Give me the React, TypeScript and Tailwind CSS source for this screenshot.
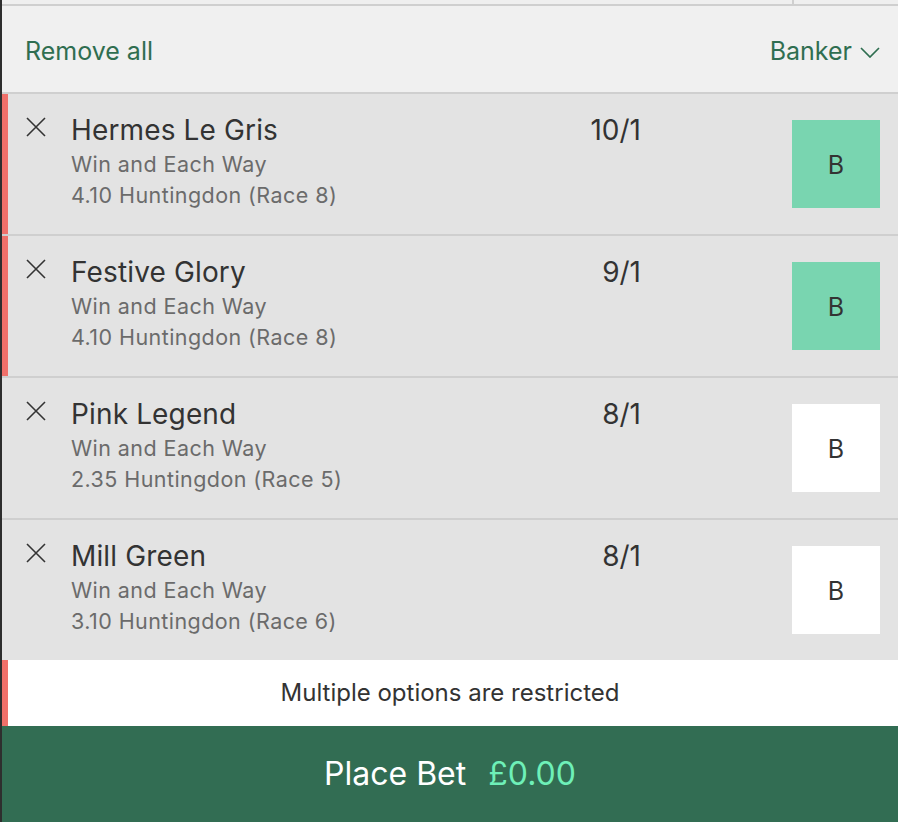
type Selection = {
  name: string;
  market: string;
  race: string;
  odds: string;
  banker: boolean;
  restricted: boolean;
};

const selections: Selection[] = [
  { name: "Hermes Le Gris", market: "Win and Each Way", race: "4.10 Huntingdon (Race 8)", odds: "10/1", banker: true, restricted: true },
  { name: "Festive Glory", market: "Win and Each Way", race: "4.10 Huntingdon (Race 8)", odds: "9/1", banker: true, restricted: true },
  { name: "Pink Legend", market: "Win and Each Way", race: "2.35 Huntingdon (Race 5)", odds: "8/1", banker: false, restricted: false },
  { name: "Mill Green", market: "Win and Each Way", race: "3.10 Huntingdon (Race 6)", odds: "8/1", banker: false, restricted: false },
];

function SelectionRow({ s }: { s: Selection }) {
  return (
    <div className="flex h-[140px] shrink-0 bg-[#e3e3e3]">
      {/* restriction marker */}
      <div className={`w-[6px] shrink-0 ${s.restricted ? "bg-[#f0706a]" : "bg-[#e3e3e3]"}`} />

      <div className="flex flex-1 pt-[18px] pr-[18px]">
        <button className="ml-[18px] mt-[5px] h-[20px] w-[20px] shrink-0 text-[#333]">
          <svg width="20" height="20" viewBox="0 0 20 20" fill="none" stroke="currentColor" strokeWidth="1.6">
            <path d="M1 1L19 19M19 1L1 19" />
          </svg>
        </button>

        <div className="ml-[25px] flex-1">
          <div className="text-[28px] leading-[36px] tracking-[0.005em] text-[#333]">{s.name}</div>
          <div className="text-[21.5px] leading-[32px] tracking-[0.02em] text-[#6b6b6b]">{s.market}</div>
          <div className="text-[21.5px] leading-[31px] tracking-[0.02em] text-[#6b6b6b]">{s.race}</div>
        </div>

        <div className="w-[120px] text-right text-[28px] leading-[36px] text-[#333]">{s.odds}</div>

        <div className="ml-[151px] mt-[8px]">
          <div
            className={`flex h-[88px] w-[88px] items-center justify-center pt-[4px] text-[25px] text-[#333] ${
              s.banker ? "bg-[#79d5b0]" : "bg-white"
            }`}
          >
            B
          </div>
        </div>
      </div>
    </div>
  );
}

export default function App() {
  return (
    <div className="flex h-[822px] w-[898px] overflow-hidden bg-[#2e2e2e] font-['Inter',sans-serif]">
      <div className="ml-[2px] flex flex-1 flex-col bg-[#efefef]">
        {/* bit of the panel above */}
        <div className="flex h-[4px] shrink-0">
          <div className="w-[790px]" />
          <div className="w-[2px] bg-[#cfcfcf]" />
        </div>
        <div className="h-[2px] shrink-0 bg-[#cfcfcf]" />

        {/* header */}
        <div className="flex h-[86px] shrink-0 items-center justify-between bg-[#f0f0f0] pl-[23px] pr-[18px] pt-[5px]">
          <button className="text-[25px] text-[#2f6e50]">Remove all</button>
          <button className="flex items-center gap-[8px] text-[25px] text-[#2f6e50]">
            Banker
            <svg width="20" height="11" viewBox="0 0 20 11" fill="none" stroke="currentColor" strokeWidth="1.7" className="mt-[2px]">
              <path d="M1 1L10 10L19 1" />
            </svg>
          </button>
        </div>

        <div className="flex shrink-0 flex-col gap-[2px] border-t-2 border-[#cfcfcf] bg-[#cfcfcf]">
          {selections.map((s) => (
            <SelectionRow key={s.name} s={s} />
          ))}
        </div>

        {/* warning */}
        <div className="flex h-[66px] shrink-0 bg-white">
          <div className="w-[6px] bg-[#f0706a]" />
          <div className="flex flex-1 items-center justify-center pr-[6px] text-[24px] text-[#333]">
            Multiple options are restricted
          </div>
        </div>

        <button className="flex h-[96px] shrink-0 items-center justify-center gap-[22px] bg-[#326d53] text-[32px]">
          <span className="text-white">Place Bet</span>
          <span className="text-[#6ef0b8]">£0.00</span>
        </button>
      </div>
    </div>
  );
}
